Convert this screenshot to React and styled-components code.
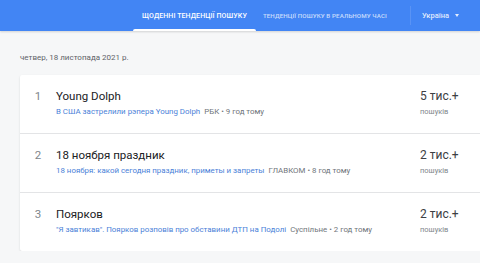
import styled, { createGlobalStyle } from 'styled-components'

const GlobalStyle = createGlobalStyle`
    body {
        margin: 0;
        background: #f6f7f8;
        font-family: Roboto, "Noto Sans", Arial, sans-serif;
        overflow: hidden;
    }
`

const Header = styled('header')`
    height: 31px;
    background: #4285f4;
    display: flex;
    align-items: stretch;
    padding-left: 133px;
    box-shadow: 0 1px 2px rgba(0, 0, 0, 0.15);
`

const Tab = styled('div')`
    position: relative;
    display: flex;
    align-items: center;
    padding: 0 ${(p) => p.$pad}px;
    font-size: ${(p) => p.$size}px;
    font-weight: 500;
    letter-spacing: 0.1px;
    text-transform: uppercase;
    color: ${(p) => (p.$active ? '#fff' : 'rgba(255,255,255,0.72)')};

    &::after {
        content: '';
        display: ${(p) => (p.$active ? 'block' : 'none')};
        position: absolute;
        left: 0;
        right: 0;
        bottom: 0;
        height: 2px;
        border-radius: 2px 2px 0 0;
        background: #fff;
    }
`

const Country = styled('div')`
    display: flex;
    align-items: center;
    margin-left: 16px;
    padding-left: 11px;
    border-left: 1px solid rgba(255, 255, 255, 0.12);
    margin-top: 6px;
    margin-bottom: 6px;
    font-size: 7.5px;
    font-weight: 500;
    color: rgba(255, 255, 255, 0.85);
`

const Arrow = styled('span')`
    margin-left: 6px;
    width: 0;
    height: 0;
    border-left: 2.5px solid transparent;
    border-right: 2.5px solid transparent;
    border-top: 3px solid rgba(255, 255, 255, 0.85);
`

const Main = styled('main')`
    padding: 21px 0 0 20px;
`

const DateLine = styled('div')`
    font-size: 8px;
    color: #5f6368;
    height: 12px;
    line-height: 12px;
    margin-bottom: 11px;
`

const Card = styled('div')`
    background: #fff;
    border-radius: 2px 0 0 2px;
    box-shadow: 0 1px 2px rgba(60, 64, 67, 0.18);
`

const Row = styled('div')`
    display: flex;
    height: 58px;
    border-top: ${(p) => (p.$first ? 'none' : '1px solid #e3e4e6')};
`

const Num = styled('div')`
    width: 36px;
    flex: none;
    padding-top: 14px;
    text-align: center;
    font-size: 11.5px;
    color: #80868b;
    line-height: 14px;
`

const Body = styled('div')`
    flex: 1;
    padding-left: 0;
    padding-top: 13px;
`

const Title = styled('div')`
    font-size: 11.5px;
    color: #202124;
    line-height: 16px;
`

const Sub = styled('div')`
    margin-top: 3px;
    font-size: 7.9px;
    line-height: 10px;
    white-space: nowrap;
`

const Link = styled('span')`
    color: #4a7fd8;
`

const Source = styled('span')`
    margin-left: 4px;
    color: #70757a;
`

const Count = styled('div')`
    width: 60px;
    flex: none;
    padding-top: 13px;
`

const Big = styled('div')`
    font-size: 12px;
    line-height: 16px;
    color: #3c4043;
`

const Small = styled('div')`
    margin-top: 3px;
    font-size: 7.5px;
    line-height: 10px;
    color: #80868b;
`

const trends = [
    {
        title: 'Young Dolph',
        link: 'В США застрелили рэпера Young Dolph',
        source: 'РБК • 9 год тому',
        count: '5 тис.+',
    },
    {
        title: '18 ноября праздник',
        link: '18 ноября: какой сегодня праздник, приметы и запреты',
        source: 'ГЛАВКОМ • 8 год тому',
        count: '2 тис.+',
    },
    {
        title: 'Поярков',
        link: '"Я завтикав". Поярков розповів про обставини ДТП на Подолі',
        source: 'Суспільне • 2 год тому',
        count: '2 тис.+',
    },
]

function App() {
    return (
        <>
            <GlobalStyle />
            <Header>
                <Tab $active $pad={9} $size={7}>Щоденні тенденції пошуку</Tab>
                <Tab $pad={7} $size={6.2}>Тенденції пошуку в реальному часі</Tab>
                <Country>
                    Україна
                    <Arrow />
                </Country>
            </Header>
            <Main>
                <DateLine>четвер, 18 листопада 2021 р.</DateLine>
                <Card>
                    {trends.map((t, i) => (
                        <Row key={i} $first={i === 0}>
                            <Num>{i + 1}</Num>
                            <Body>
                                <Title>{t.title}</Title>
                                <Sub>
                                    <Link>{t.link}</Link>
                                    <Source>{t.source}</Source>
                                </Sub>
                            </Body>
                            <Count>
                                <Big>{t.count}</Big>
                                <Small>пошуків</Small>
                            </Count>
                        </Row>
                    ))}
                </Card>
            </Main>
        </>
    )
}

export default App
